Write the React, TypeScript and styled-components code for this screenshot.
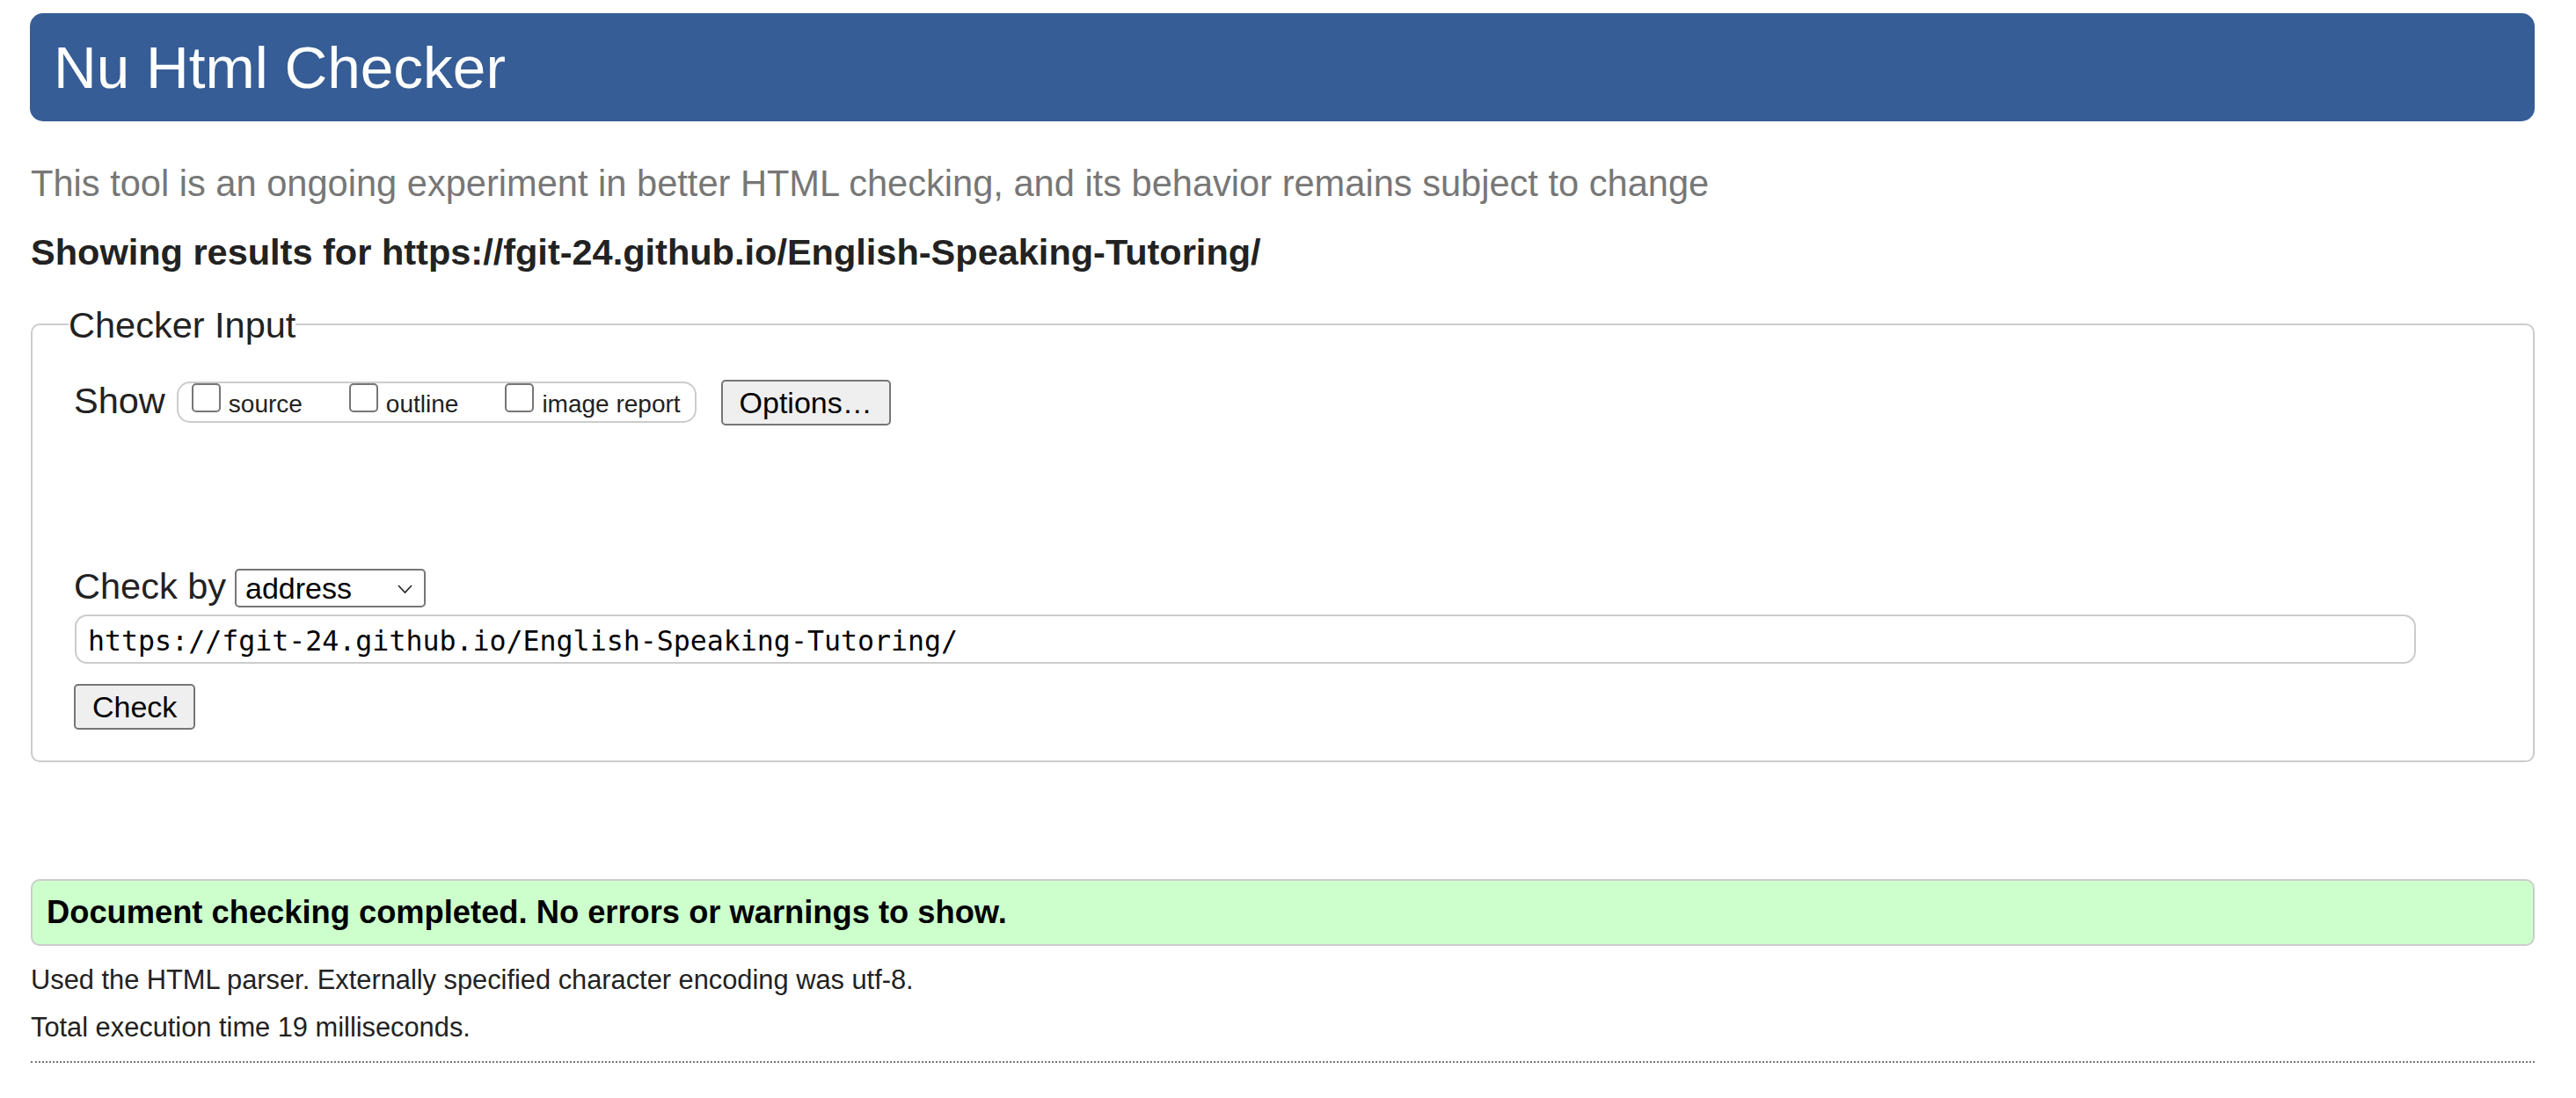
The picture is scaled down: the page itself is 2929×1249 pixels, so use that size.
import React from 'react';
import styled, { createGlobalStyle } from 'styled-components';

const GlobalStyle = createGlobalStyle`
  html, body {
    margin: 0;
    padding: 0;
    background: #fff;
  }
  body {
    font-family: "Liberation Sans", Arial, sans-serif;
    font-size: 30.8px;
    color: #222;
  }
`;

const Page = styled.div`
  padding: 15px 47px 40px 35px;
`;

const Header = styled.h1`
  margin: 0 0 0 -1px;
  height: 123px;
  padding: 0 0 0 27px;
  background: #365d95;
  border-radius: 15px;
  color: #fff;
  font-size: 67.5px;
  font-weight: normal;
  line-height: 123px;
`;

const Lead = styled.p`
  margin: 46px 0 0;
  font-size: 41.6px;
  line-height: 49.8px;
  color: #777;
`;

const ResultsFor = styled.p`
  margin: 28px 0 0;
  font-size: 41.5px;
  line-height: 49.8px;
  font-weight: bold;
  color: #222;
`;

const Fieldset = styled.fieldset`
  margin: 33px 0 0;
  padding: 37px 0 35px 47px;
  border: 2px solid #ccc;
  border-radius: 10px;
  min-width: 0;
`;

const Legend = styled.legend`
  margin-left: -6px;
  padding: 0;
  font-size: 41.5px;
  line-height: 49.8px;
  color: #222;
`;

const ShowRow = styled.div`
  display: flex;
  align-items: flex-start;
`;

const BigLabel = styled.span`
  font-size: 41.5px;
  line-height: 49.8px;
  color: #222;
`;

const ToggleGroup = styled.span`
  display: inline-flex;
  align-items: flex-start;
  gap: 53px;
  box-sizing: border-box;
  height: 47px;
  margin: 3px 0 0 13px;
  padding: 0 16px 0 15px;
  border: 2px solid #ccc;
  border-radius: 15px;
`;

const ToggleItem = styled.label`
  display: flex;
  align-items: baseline;
  gap: 9px;
  font-size: 28px;
  line-height: 32px;
  color: #222;
`;

const Checkbox = styled.input`
  appearance: none;
  display: block;
  flex: none;
  width: 33px;
  height: 33px;
  margin: 0;
  box-sizing: border-box;
  border: 2px solid #767676;
  border-radius: 5px;
  background: #fff;
`;

const Button = styled.button`
  box-sizing: border-box;
  height: 52px;
  margin: 0;
  padding: 0 19px;
  border: 2px solid #767676;
  border-radius: 5px;
  background: #efefef;
  color: #000;
  font-family: "Liberation Sans", Arial, sans-serif;
  font-size: 34px;
  line-height: 1;
  cursor: pointer;
`;

const OptionsButton = styled(Button)`
  margin: 1px 0 0 28px;
`;

const SubmitButton = styled(Button)`
  display: block;
  margin-top: 23px;
`;

const CheckByRow = styled.div`
  display: flex;
  align-items: flex-end;
  gap: 10px;
  margin-top: 158px;
`;

const SelectBox = styled.span`
  position: relative;
  display: inline-block;
  box-sizing: border-box;
  width: 217px;
  height: 44px;
  margin-bottom: 1px;
  border: 2px solid #767676;
  border-radius: 5px;
  background: #fff;
`;

const Select = styled.select`
  appearance: none;
  display: block;
  width: 100%;
  height: 100%;
  margin: 0;
  padding: 0 0 0 10px;
  border: none;
  background: transparent;
  color: #000;
  font-family: "Liberation Sans", Arial, sans-serif;
  font-size: 34px;
  outline: none;
`;

const Chevron = styled.svg`
  position: absolute;
  right: 13px;
  top: 16px;
  pointer-events: none;
`;

const UrlInput = styled.input`
  display: block;
  box-sizing: border-box;
  width: 2662px;
  height: 56px;
  margin: 7px 0 0 1px;
  padding: 3px 13px 0;
  border: 2px solid #ccc;
  border-radius: 14px;
  color: #000;
  font-family: "DejaVu Sans Mono", "Liberation Mono", monospace;
  font-size: 31.6px;
  outline: none;
`;

const Notice = styled.div`
  display: flex;
  align-items: center;
  box-sizing: border-box;
  height: 76px;
  margin-top: 133px;
  padding-left: 16px;
  border: 2px solid #ccc;
  border-radius: 10px;
  background: #ccffcc;
  color: #000;
  font-size: 36.3px;
  font-weight: bold;
`;

const Detail = styled.p<{ $top: number }>`
  margin: ${({ $top }) => $top}px 0 0;
  font-size: 30.8px;
  line-height: 37px;
  color: #222;
`;

const Rule = styled.hr`
  margin: 20px 0 0;
  border: none;
  border-top: 2px dotted #777;
  height: 0;
`;

const toggles = ['source', 'outline', 'image report'];

export default function App() {
  return (
    <>
      <GlobalStyle />
      <Page>
        <Header>Nu Html Checker</Header>
        <Lead>
          This tool is an ongoing experiment in better HTML checking, and its behavior remains subject to change
        </Lead>
        <ResultsFor>Showing results for https://fgit-24.github.io/English-Speaking-Tutoring/</ResultsFor>

        <Fieldset>
          <Legend>Checker Input</Legend>
          <ShowRow>
            <BigLabel>Show</BigLabel>
            <ToggleGroup>
              {toggles.map((t) => (
                <ToggleItem key={t}>
                  <Checkbox type="checkbox" />
                  {t}
                </ToggleItem>
              ))}
            </ToggleGroup>
            <OptionsButton type="button">Options…</OptionsButton>
          </ShowRow>

          <CheckByRow>
            <BigLabel>Check by</BigLabel>
            <SelectBox>
              <Select defaultValue="address">
                <option value="address">address</option>
                <option value="file">file upload</option>
                <option value="text">text input</option>
              </Select>
              <Chevron width="17" height="11" viewBox="0 0 17 11">
                <polyline points="1,1 8.5,9 16,1" fill="none" stroke="#222" strokeWidth="1.6" />
              </Chevron>
            </SelectBox>
          </CheckByRow>
          <UrlInput type="url" defaultValue="https://fgit-24.github.io/English-Speaking-Tutoring/" />
          <SubmitButton type="submit">Check</SubmitButton>
        </Fieldset>

        <Notice>Document checking completed. No errors or warnings to show.</Notice>
        <Detail $top={20}>Used the HTML parser. Externally specified character encoding was utf-8.</Detail>
        <Detail $top={17}>Total execution time 19 milliseconds.</Detail>
        <Rule />
      </Page>
    </>
  );
}
